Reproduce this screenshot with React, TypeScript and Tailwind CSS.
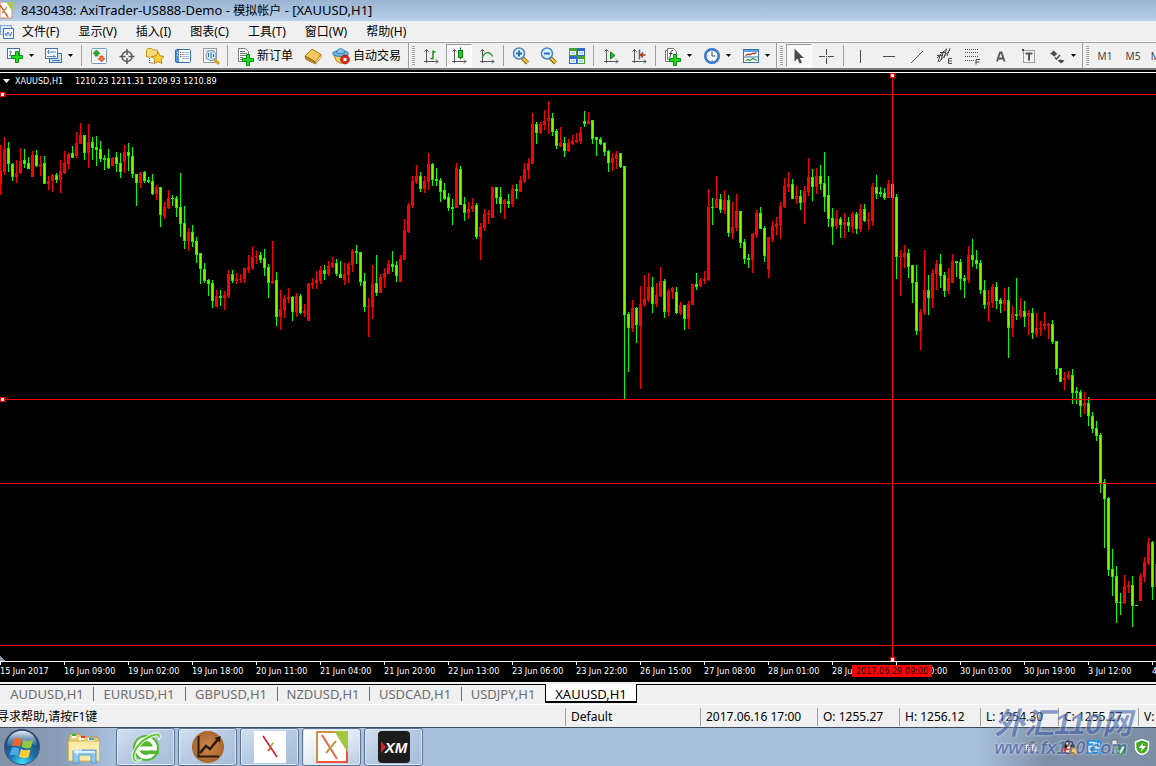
import { type ReactNode } from 'react'
import clsx from 'clsx'

// [colour, high, body top, body bottom, low], one candle every 4px
type Candle = ['r' | 'g', number, number, number, number]

const candles: Candle[] = [
  ['r', 55, 81, 94, 105], ['r', 47, 59, 82, 85], ['g', 52, 58, 74, 82], ['g', 73, 74, 87, 91], ['r', 70, 83, 87, 93],
  ['r', 58, 71, 83, 84], ['g', 59, 70, 74, 78], ['g', 67, 73, 79, 79], ['r', 61, 65, 87, 87], ['g', 60, 65, 76, 77],
  ['r', 66, 74, 77, 86], ['g', 66, 73, 94, 94], ['r', 86, 91, 94, 100], ['r', 84, 85, 91, 102], ['g', 83, 85, 90, 93],
  ['r', 70, 81, 90, 103], ['r', 61, 73, 83, 84], ['r', 63, 64, 74, 79], ['g', 56, 63, 68, 68], ['r', 42, 53, 66, 68],
  ['r', 33, 45, 54, 54], ['g', 45, 45, 63, 70], ['r', 34, 52, 63, 78], ['g', 47, 52, 58, 70], ['g', 46, 57, 60, 76],
  ['g', 51, 59, 69, 72], ['g', 65, 68, 70, 80], ['g', 59, 68, 78, 79], ['r', 67, 68, 76, 76], ['g', 62, 67, 74, 82],
  ['g', 63, 73, 82, 88], ['r', 55, 62, 72, 83], ['g', 53, 62, 66, 81], ['g', 57, 66, 84, 88], ['g', 84, 84, 93, 116],
  ['r', 82, 83, 93, 98], ['g', 81, 82, 91, 93], ['g', 87, 90, 92, 93], ['g', 84, 91, 104, 105], ['r', 95, 97, 104, 110],
  ['g', 97, 97, 125, 137], ['r', 112, 117, 126, 129], ['r', 100, 108, 118, 119], ['g', 105, 108, 109, 116], ['g', 106, 108, 118, 127],
  ['g', 83, 117, 134, 147], ['g', 116, 133, 151, 159], ['r', 138, 142, 151, 161], ['g', 135, 142, 152, 157], ['g', 147, 151, 165, 173],
  ['g', 163, 163, 179, 194], ['g', 173, 179, 191, 193], ['g', 189, 190, 194, 206], ['g', 190, 193, 211, 218], ['r', 200, 206, 217, 217],
  ['g', 200, 206, 208, 216], ['r', 201, 205, 208, 220], ['r', 180, 184, 206, 208], ['g', 180, 184, 191, 193], ['r', 183, 189, 191, 194],
  ['r', 184, 189, 190, 193], ['r', 178, 178, 189, 193], ['r', 165, 177, 180, 183], ['r', 156, 167, 178, 180], ['r', 161, 166, 167, 174],
  ['g', 162, 165, 170, 173], ['g', 159, 168, 178, 186], ['g', 174, 177, 193, 208], ['r', 151, 191, 193, 194], ['g', 182, 190, 227, 236],
  ['r', 200, 219, 227, 240], ['r', 205, 208, 220, 228], ['r', 198, 207, 209, 213], ['g', 206, 207, 222, 231], ['r', 203, 206, 222, 227],
  ['g', 204, 206, 223, 224], ['r', 214, 221, 223, 227], ['r', 193, 194, 231, 231], ['r', 188, 193, 195, 199], ['r', 181, 190, 193, 199],
  ['r', 176, 180, 191, 194], ['g', 175, 180, 184, 190], ['r', 171, 176, 184, 186], ['r', 167, 173, 177, 178], ['g', 169, 173, 184, 186],
  ['g', 171, 184, 188, 188], ['r', 173, 184, 190, 195], ['r', 172, 174, 185, 193], ['r', 159, 161, 175, 182], ['g', 155, 161, 163, 174],
  ['g', 162, 162, 192, 196], ['g', 183, 191, 217, 222], ['r', 208, 216, 217, 247], ['r', 175, 194, 217, 229], ['g', 165, 193, 203, 206],
  ['r', 184, 187, 203, 203], ['r', 178, 183, 188, 198], ['r', 170, 174, 184, 184], ['g', 161, 174, 177, 182], ['g', 171, 175, 186, 192],
  ['r', 165, 169, 192, 192], ['r', 129, 140, 170, 170], ['r', 113, 115, 142, 143], ['r', 86, 91, 116, 118], ['r', 75, 86, 92, 94],
  ['g', 82, 86, 99, 102], ['r', 86, 91, 99, 103], ['r', 63, 74, 92, 100], ['g', 73, 74, 90, 96], ['g', 78, 89, 91, 96],
  ['g', 88, 90, 102, 112], ['g', 93, 100, 109, 110], ['g', 103, 107, 118, 121], ['g', 109, 117, 119, 135], ['r', 73, 78, 118, 118],
  ['g', 76, 79, 115, 115], ['g', 107, 114, 123, 131], ['r', 112, 119, 123, 129], ['r', 108, 116, 119, 122], ['g', 113, 115, 147, 149],
  ['r', 133, 137, 147, 170], ['r', 119, 124, 138, 141], ['r', 120, 123, 125, 134], ['r', 97, 97, 128, 128], ['g', 97, 97, 108, 114],
  ['g', 97, 107, 114, 123], ['r', 109, 110, 114, 129], ['g', 104, 111, 114, 118], ['r', 95, 99, 114, 117], ['g', 94, 99, 101, 109],
  ['r', 86, 90, 102, 102], ['r', 73, 79, 91, 93], ['r', 68, 73, 80, 89], ['r', 23, 34, 74, 74], ['g', 32, 34, 43, 54],
  ['r', 32, 34, 43, 44], ['r', 20, 31, 35, 40], ['r', 11, 28, 31, 44], ['g', 23, 28, 42, 46], ['g', 39, 41, 56, 59],
  ['r', 37, 53, 56, 57], ['g', 47, 53, 61, 67], ['r', 49, 53, 61, 62], ['r', 45, 51, 54, 55], ['r', 43, 50, 52, 53],
  ['r', 37, 42, 51, 54], ['g', 21, 31, 34, 37], ['r', 22, 31, 34, 34], ['g', 30, 30, 49, 54], ['g', 47, 47, 50, 66],
  ['g', 47, 49, 54, 55], ['g', 52, 53, 62, 66], ['g', 60, 61, 73, 82], ['r', 63, 68, 73, 81], ['r', 61, 64, 69, 79],
  ['g', 63, 63, 77, 78], ['g', 76, 76, 225, 309], ['g', 222, 224, 238, 282], ['r', 210, 218, 238, 242], ['g', 217, 218, 235, 253],
  ['r', 196, 214, 236, 299], ['r', 185, 209, 215, 217], ['r', 183, 197, 210, 212], ['g', 187, 197, 214, 223], ['r', 193, 205, 214, 217],
  ['r', 177, 191, 206, 207], ['g', 189, 191, 222, 228], ['r', 199, 201, 222, 226], ['r', 197, 198, 202, 209], ['g', 197, 202, 223, 224],
  ['r', 212, 215, 223, 225], ['g', 215, 215, 229, 240], ['r', 211, 214, 229, 239], ['r', 194, 194, 215, 215], ['g', 183, 194, 197, 200],
  ['r', 188, 190, 196, 197], ['r', 181, 189, 191, 194], ['r', 99, 117, 190, 191], ['g', 108, 117, 118, 135], ['r', 86, 109, 118, 118],
  ['g', 104, 109, 120, 123], ['r', 100, 110, 120, 124], ['g', 105, 110, 143, 147], ['r', 112, 137, 143, 149], ['r', 104, 121, 138, 141],
  ['g', 121, 121, 153, 158], ['g', 149, 152, 169, 174], ['g', 164, 168, 170, 178], ['r', 143, 144, 170, 183], ['r', 120, 123, 145, 148],
  ['g', 117, 123, 139, 139], ['g', 136, 138, 166, 172], ['r', 147, 147, 179, 188], ['r', 131, 136, 149, 152], ['r', 127, 134, 137, 145],
  ['r', 112, 116, 135, 149], ['r', 88, 96, 117, 118], ['r', 82, 94, 97, 102], ['g', 89, 94, 109, 109], ['r', 96, 106, 109, 114],
  ['g', 100, 106, 113, 120], ['r', 96, 101, 113, 134], ['r', 68, 87, 102, 106], ['g', 79, 87, 97, 111], ['r', 78, 86, 97, 104],
  ['g', 75, 86, 94, 100], ['g', 62, 93, 107, 122], ['g', 86, 105, 129, 137], ['g', 118, 128, 137, 155], ['r', 120, 129, 136, 139],
  ['g', 127, 129, 135, 148], ['r', 123, 132, 135, 148], ['g', 127, 132, 136, 142], ['r', 122, 124, 137, 143], ['g', 122, 124, 139, 144],
  ['r', 114, 119, 139, 142], ['g', 114, 119, 131, 132], ['r', 122, 130, 131, 140], ['r', 93, 97, 131, 136], ['g', 85, 97, 104, 109],
  ['g', 97, 102, 104, 107], ['g', 98, 103, 108, 110], ['r', 90, 94, 108, 108], ['g', 94, 94, 108, 108], ['g', 104, 107, 167, 189],
  ['r', 160, 166, 167, 206], ['r', 155, 163, 167, 178], ['g', 159, 163, 177, 188], ['g', 175, 175, 193, 213], ['g', 175, 192, 241, 245],
  ['r', 219, 222, 241, 260], ['r', 160, 200, 223, 225], ['g', 185, 200, 208, 225], ['r', 179, 183, 208, 218], ['r', 170, 174, 184, 200],
  ['g', 164, 174, 186, 198], ['g', 182, 185, 201, 207], ['r', 178, 188, 201, 204], ['r', 164, 171, 193, 193], ['g', 171, 171, 173, 187],
  ['g', 169, 172, 189, 200], ['g', 185, 188, 191, 208], ['r', 156, 165, 190, 193], ['g', 149, 165, 170, 177], ['g', 160, 170, 174, 179],
  ['g', 170, 173, 200, 204], ['g', 190, 200, 215, 219], ['r', 200, 212, 215, 232], ['r', 194, 197, 213, 218], ['g', 192, 197, 211, 219],
  ['g', 208, 210, 214, 223], ['r', 198, 210, 214, 221], ['g', 197, 210, 238, 268], ['r', 216, 224, 238, 247], ['g', 188, 224, 226, 230],
  ['r', 208, 220, 226, 228], ['g', 211, 221, 227, 237], ['r', 220, 223, 226, 245], ['g', 218, 223, 243, 249], ['r', 223, 238, 244, 247],
  ['r', 231, 238, 239, 246], ['r', 222, 234, 236, 240], ['r', 233, 234, 236, 249], ['g', 230, 234, 252, 254], ['g', 251, 251, 279, 285],
  ['g', 278, 278, 292, 292], ['r', 282, 288, 290, 300], ['r', 281, 285, 288, 290], ['g', 279, 285, 303, 314], ['g', 297, 301, 303, 314],
  ['g', 300, 302, 316, 327], ['r', 302, 313, 316, 324], ['g', 307, 313, 326, 336], ['g', 322, 326, 339, 343], ['g', 331, 338, 346, 351],
  ['g', 343, 345, 393, 403], ['g', 389, 392, 409, 458], ['g', 407, 408, 480, 486], ['g', 459, 479, 487, 506], ['g', 476, 486, 513, 533],
  ['g', 503, 512, 513, 525], ['r', 485, 496, 513, 514], ['r', 491, 495, 497, 503], ['g', 486, 495, 516, 537], ['g', 515, 515, 516, 516],
  ['r', 483, 486, 511, 511], ['r', 467, 472, 487, 492], ['r', 448, 453, 473, 475], ['g', 451, 452, 497, 510], ['r', 474, 474, 497, 497],
]

const dates = [
  '15 Jun 2017', '16 Jun 09:00', '19 Jun 02:00', '19 Jun 18:00', '20 Jun 11:00', '21 Jun 04:00', '21 Jun 20:00',
  '22 Jun 13:00', '23 Jun 06:00', '23 Jun 22:00', '26 Jun 15:00', '27 Jun 08:00', '28 Jun 01:00', '28 Jun 17:00',
  '29 Jun 10:00', '30 Jun 03:00', '30 Jun 19:00', '3 Jul 12:00', '4 Jul 05:00',
]

const menus = ['文件(F)', '显示(V)', '插入(I)', '图表(C)', '工具(T)', '窗口(W)', '帮助(H)']

const tabs = [
  { name: 'AUDUSD,H1', width: 'w-[92px]' },
  { name: 'EURUSD,H1', width: 'w-[92px]' },
  { name: 'GBPUSD,H1', width: 'w-[92px]' },
  { name: 'NZDUSD,H1', width: 'w-[92px]' },
  { name: 'USDCAD,H1', width: 'w-[92px]' },
  { name: 'USDJPY,H1', width: 'w-[84px]' },
]

const statusCells = [
  { text: 'Default', width: 'w-[135px]' },
  { text: '2017.06.16 17:00', width: 'w-[117px]' },
  { text: 'O: 1255.27', width: 'w-[82px]' },
  { text: 'H: 1256.12', width: 'w-[81px]' },
  { text: 'L: 1254.30', width: 'w-[78px]' },
  { text: 'C: 1255.27', width: 'w-[80px]' },
  { text: 'V:', width: 'w-[18px]' },
]

function Icon({ children }: { children: ReactNode }) {
  return (
    <svg width="20" height="20" viewBox="0 0 20 20" fill="none" className="shrink-0" aria-hidden="true">
      {children}
    </svg>
  )
}

function Tool({
  label,
  pressed,
  menu,
  children,
}: {
  label: string
  pressed?: boolean
  menu?: boolean
  children: ReactNode
}) {
  return (
    <button
      aria-label={label}
      className={clsx(
        'flex h-[23px] shrink-0 items-center',
        menu ? 'w-[39px] pl-1' : 'mx-px w-[26px] justify-center',
        pressed && 'border border-t-[#9a9a9a] border-r-white border-b-white border-l-[#9a9a9a] bg-[#f8f8f8]',
      )}
    >
      <Icon>{children}</Icon>
      {menu && (
        <svg width="5" height="3" viewBox="0 0 5 3" className="ml-1 shrink-0" aria-hidden="true">
          <path d="M0 0h5L2.5 3z" fill="#000" />
        </svg>
      )}
    </button>
  )
}

function Sep() {
  return <span className="mx-[2px] h-[21px] w-[2px] shrink-0 border-l border-[#a0a0a0]" />
}

function Grip() {
  return (
    <span className="flex h-full w-[9px] shrink-0 items-center border-l border-[#a0a0a0] pl-[3px]">
      <span className="h-[19px] w-[3px] bg-[repeating-linear-gradient(#a0a0a0_0px_1px,#f0f0f0_1px_2px)]" />
    </span>
  )
}

function Plus({ cy }: { cy: number }) {
  return (
    <path
      d={`M10.500 ${cy - 5.5}h3v4h4v3h-4v4h-3v-4h-4v-3h4z`}
      fill="#1edc1e"
      stroke="#0b8a12"
    />
  )
}

function Axes() {
  return <path d="M5.500 3.500v13.500M3 15.500h14M3.500 5.500l2-2 2 2M15 13.500l2 2-2 2" stroke="#555" />
}

function Lens({ plus }: { plus?: boolean }) {
  return (
    <>
      <path d="M11.500 12l5 5" stroke="#8a6a10" strokeWidth="4" />
      <path d="M12 12.500l4.500 4" stroke="#f3cf3c" strokeWidth="2" />
      <circle cx="8" cy="7.500" r="5.500" fill="#d8efff" stroke="#4a86c0" strokeWidth="1.500" />
      <path d={plus ? 'M5 7.500h6M8 4.500v6' : 'M5 7.500h6'} stroke="#2f6fae" strokeWidth="2" />
    </>
  )
}

function Toolbar() {
  return (
    <div className="flex h-[27px] items-center overflow-hidden border-b-2 border-[#7d7d7d] bg-[#f0f0f0] pl-px">
      <Tool label="新图表" menu>
        <rect x="2.500" y="2.500" width="12" height="10" fill="#fff" stroke="#3f74ad" />
        <path d="M5.500 4.500v6M4 9.500h8M4 6h3" stroke="#6d8fb5" />
        <Plus cy={11} />
      </Tool>
      <Tool label="图表配置" menu>
        <rect x="5.500" y="7.500" width="12" height="9" fill="#cfe2f5" stroke="#3f74ad" />
        <path d="M8 14.500h8" stroke="#3f74ad" />
        <rect x="1.500" y="2.500" width="12" height="10" fill="#f4f9ff" stroke="#3f74ad" />
        <path d="M4.500 4v4M3 6h9M3 10.500h9M10 9v3" stroke="#5f86b2" />
      </Tool>
      <Sep />
      <Tool label="市场报价">
        <rect x="2.500" y="2.500" width="15" height="15" rx="1" fill="#fff" stroke="#6aa0d0" />
        <path d="M4 5h12M4 8h12M4 11h12M4 14h12" stroke="#dcdcdc" />
        <path d="M7.500 4l3.500 3.500h-2v2.500h-3V7.500H4z" fill="#28b428" stroke="#0d7d12" strokeWidth=".7" />
        <path d="M12.500 16L9 12.500h2V10h3v2.500h2z" fill="#ff7a3a" stroke="#c03a10" strokeWidth=".7" />
      </Tool>
      <Tool label="数据窗口">
        <circle cx="10" cy="10.500" r="5" stroke="#5a5a5a" strokeWidth="1.500" />
        <path d="M10 3v6M10 12v6M2.500 10.500h6M11.500 10.500h6" stroke="#5a5a5a" strokeWidth="1.500" />
      </Tool>
      <Tool label="导航">
        <path d="M1.500 11V3.500l1-1h4l1 1.500h5V11z" fill="#f7dd7a" stroke="#c39a28" />
        <path d="M4.500 12v5h4" stroke="#555" strokeDasharray="1 1" />
        <path
          d="M13 6l2 3.800 4 .7-2.900 2.900.7 4.100-3.800-1.900-3.800 1.900.7-4.100L7 10.500l4-.7z"
          fill="#fbd437"
          stroke="#b98411"
        />
      </Tool>
      <Tool label="终端">
        <rect x="2.500" y="3.500" width="15" height="13" rx="1" fill="#fff" stroke="#2f6cab" />
        <path d="M3 4h3v12H3z" fill="#4f95d8" />
        <path d="M4 6.500h1M4 9.500h1" stroke="#fff" />
        <path d="M7 6.500h1M7 8.500h1M7 10.500h1" stroke="#c22" />
        <path d="M9 6.500h7M9 8.500h7M9 10.500h7M9 12.500h7" stroke="#9fb9d6" />
      </Tool>
      <Tool label="策略测试">
        <rect x="2.500" y="2.500" width="13" height="14" fill="#fafafa" stroke="#9a9a9a" />
        <path d="M4 5h10M4 13h4" stroke="#b5b5b5" />
        <path d="M13 13l5 5" stroke="#d8a520" strokeWidth="3" />
        <circle cx="10" cy="9.500" r="5" fill="#cfe7fa" stroke="#5c93c7" />
        <path d="M7.500 7v4M10 6.500v6M12.500 8v3" stroke="#3a6ea5" />
      </Tool>
      <Sep />
      <button className="flex h-[23px] w-[68px] shrink-0 items-center pl-[5px] whitespace-nowrap">
        <Icon>
          <path d="M2.500 2.500h7l3 3v10h-10z" fill="#fff" stroke="#777" />
          <path d="M4 5.500h5M4 7.500h7M4 9.500h6M4 11.500h3M4 13.500h3" stroke="#777" />
          <Plus cy={14} />
        </Icon>
        <span className="ml-px">新订单</span>
      </button>
      <Tool label="MetaEditor">
        <path d="M2 10l7-7 9 5.500-5.500 7.500z" fill="#f3c85a" stroke="#b07a18" />
        <path d="M2 10l1 3.500 9.500 4.500v-2z" fill="#c8882a" stroke="#8d5e12" strokeWidth=".8" />
        <path d="M12.500 16v2L18 11.500V8.500z" fill="#fff2c0" stroke="#a87920" strokeWidth=".8" />
      </Tool>
      <button className="flex h-[23px] w-[81px] shrink-0 items-center pl-1 whitespace-nowrap">
        <Icon>
          <path d="M3 9l2 5.500 5 3 5-3 2-5.500z" fill="#f5cf55" stroke="#b88a1c" />
          <ellipse cx="9.500" cy="7.500" rx="8" ry="3" fill="#6fb5e0" stroke="#3a7fb2" />
          <path d="M5.500 6.500c0-5 8-5 8 0-1.500 1.500-6.500 1.500-8 0z" fill="#8cc9ee" stroke="#3a7fb2" />
          <circle cx="14" cy="13.500" r="4.300" fill="#e02a1c" stroke="#a81408" />
          <rect x="12.500" y="12" width="3" height="3" fill="#fff" />
        </Icon>
        <span className="ml-[2px]">自动交易</span>
      </button>
      <Grip />
      <Tool label="柱状图">
        <Axes />
        <path d="M9.500 12.500h2.500V4.500M12 6H14.500" stroke="#1c8a1c" strokeWidth="1.500" />
      </Tool>
      <Tool label="阴阳烛" pressed>
        <Axes />
        <path d="M11.500 1.500v12" stroke="#0a7a10" />
        <rect x="9.500" y="4.500" width="4" height="7" fill="#22cc33" stroke="#0a7a10" />
      </Tool>
      <Tool label="折线图">
        <Axes />
        <path d="M5 12c3-6 6-8 11-1.500" stroke="#2f9a3a" strokeWidth="1.300" />
      </Tool>
      <Sep />
      <Tool label="放大">
        <Lens plus />
      </Tool>
      <Tool label="缩小">
        <Lens />
      </Tool>
      <Tool label="平铺窗口">
        <path d="M2 2h8v8H2zM10 10h8v8h-8z" fill="#3ea32c" />
        <path d="M10 2h8v8h-8zM2 10h8v8H2z" fill="#2f66d8" />
        <path d="M3 5h6v4H3zM11 5h6v4h-6zM3 13h6v4H3zM11 13h6v4h-6z" fill="#eef4ff" />
        <path d="M4 7h4M12 7h4M4 15h4M12 15h4" stroke="#8fb2dc" />
      </Tool>
      <Sep />
      <Tool label="自动滚动">
        <Axes />
        <path d="M9.500 6v7l4.500-3.500z" fill="#25c03a" stroke="#11801c" />
      </Tool>
      <Tool label="图表平移">
        <Axes />
        <path d="M10.500 3.500v10" stroke="#3a6ea5" strokeWidth="1.500" />
        <path d="M16.500 9h-5M14 6.500L11.500 9l2.500 2.500" stroke="#b03010" strokeWidth="1.300" />
      </Tool>
      <Sep />
      <Tool label="指标列表" menu>
        <path d="M2.500 4.500h9v11h-9z" fill="#fff" stroke="#777" />
        <path d="M4.500 2.500h6l3 3v8h-9z" fill="#fff" stroke="#777" />
        <path d="M10 4.500c-2-.5-2 1-2.300 3.500-.3 2-.5 3.500-2 3.500M6 7.500h3.500" stroke="#333" />
        <Plus cy={14} />
      </Tool>
      <Tool label="时间周期" menu>
        <circle cx="10" cy="10" r="6.800" fill="#f4faff" stroke="#1f62b4" strokeWidth="2.500" />
        <circle cx="10" cy="10" r="7.200" stroke="#5ea7ea" strokeWidth=".8" />
        <path d="M10 5.500V10h3.500" stroke="#444" />
        <path d="M10 14v1M5.500 10h1" stroke="#777" />
      </Tool>
      <Tool label="模板" menu>
        <rect x="2.500" y="3.500" width="15" height="13" fill="#fff" stroke="#3472b0" />
        <path d="M3 4h14v2H3z" fill="#5fa4e4" />
        <path d="M3 11h14" stroke="#3472b0" />
        <path d="M4.500 9.500l2-1h3l2-1h2l2-1" stroke="#a83a1c" strokeWidth="1.300" />
        <path d="M5 14.500l2-1 2 1 3-2 2 1 2 1" stroke="#2a9a34" strokeWidth="1.300" />
      </Tool>
      <Grip />
      <Tool label="光标" pressed>
        <path d="M5.500 2.500v13l3-3 2.200 5 2.300-1-2.200-4.500h4z" fill="#4a4a4a" />
      </Tool>
      <Tool label="十字准线">
        <path d="M9.500 3v6M9.500 12v6M2 10.500h6M11 10.500h6M9 10.500h1" stroke="#4a4a4a" />
      </Tool>
      <Sep />
      <Tool label="垂直线">
        <path d="M9.500 4v13" stroke="#4a4a4a" />
      </Tool>
      <Tool label="水平线">
        <path d="M4 10.500h12" stroke="#4a4a4a" />
      </Tool>
      <Tool label="趋势线">
        <path d="M4 17L16 5" stroke="#4a4a4a" />
      </Tool>
      <Tool label="等距通道">
        <path d="M2 12L12 2.500M4 16L15 4" stroke="#4a4a4a" />
        <path d="M3 16l2.500-8M6 14l2.500-9M9 12l2.500-9M12 10l3-8M2 9.500h6M5 6.500h6" stroke="#4a4a4a" />
        <path d="M17 12.500h-3.500v5H17M13.500 15H17" stroke="#4a4a4a" />
      </Tool>
      <Tool label="斐波纳契回调线">
        <path d="M2 3.500h14M2 6.500h14M2 10.500h14M2 14.500h9" stroke="#4a4a4a" strokeDasharray="1 1" />
        <path d="M17 13.500h-4v5M13 16h3.500" stroke="#4a4a4a" />
      </Tool>
      <Tool label="文字">
        <path d="M6 15.500l3-9h1.500l3 9M7.300 12.500h5" stroke="#555" strokeWidth="1.800" />
      </Tool>
      <Tool label="文字标签">
        <rect x="4.500" y="4.500" width="11" height="12" stroke="#4a4a4a" strokeDasharray="1 1" />
        <rect x="3" y="3" width="2" height="2" fill="#4a4a4a" />
        <path d="M6.500 7.500h7M10 7v7.500" stroke="#555" strokeWidth="2" />
      </Tool>
      <Tool label="箭头" menu>
        <path d="M6.500 4.500l4 3.500-1.500.8-1.500 2-3-2.500-1.500-.2z" fill="#4a4a4a" />
        <path d="M8 11.500l1.500 1.500 3.500-4" stroke="#4a4a4a" strokeWidth="1.500" />
        <path d="M13.500 17l-3-2.500 3-1 4 1-2 2-1.500 1z" fill="#4a4a4a" />
      </Tool>
      <Grip />
      {['M1', 'M5', 'M15'].map((period) => (
        <button key={period} className="w-7 shrink-0 text-[10px] text-[#444]">
          {period}
        </button>
      ))}
    </div>
  )
}

function Handle({ x, y }: { x: number; y: number }) {
  return (
    <g>
      <rect x={x - 2} y={y - 2} width="5" height="5" fill="#f00" />
      <rect x={x - 1} y={y - 1} width="3" height="3" fill="#fff" />
    </g>
  )
}

function Chart() {
  return (
    <main className="relative overflow-hidden border-t border-white bg-black font-['DejaVu_Sans_Condensed','Noto_Sans',sans-serif] text-[9px] leading-3">
      <svg className="block h-[588px] w-full" shapeRendering="crispEdges" role="img" aria-label="XAUUSD,H1">
        <g transform="translate(0 17)">
          {candles.map(([colour, high, top, bottom, low], i) => {
            const fill = colour === 'r' ? '#f00' : '#0f0'
            return (
              <g key={i}>
                <rect x={i * 4} y={high} width="1" height={low - high} fill={fill} />
                <rect x={i * 4 - 1} y={top} width="3" height={bottom - top} fill={fill} />
                {colour === 'g' && bottom - top > 2 && (
                  <rect x={i * 4} y={top + 1} width="1" height={bottom - top - 2} fill="#7fff00" />
                )}
              </g>
            )
          })}
        </g>
        {[21, 326, 410, 572].map((y) => (
          <rect key={y} x="0" y={y} width="100%" height="1" fill="#f00" />
        ))}
        <rect x="892" y="0" width="1" height="588" fill="#f00" />
        <Handle x={2} y={21} />
        <Handle x={2} y={326} />
        <Handle x={892} y={2} />
        <Handle x={892} y={586} />
        <path d="M0 583l5 5H0z" fill="#8896a8" />
      </svg>
      <div className="absolute top-0 left-[3px] flex h-4 items-center gap-[5px] whitespace-nowrap text-white">
        <svg width="7" height="4" viewBox="0 0 7 4" aria-hidden="true">
          <path d="M0 0h7L3.500 4z" fill="#fff" />
        </svg>
        <span className="w-[55px]">XAUUSD,H1</span>
        <span>1210.23 1211.31 1209.93 1210.89</span>
      </div>
      <div className="relative flex h-[21px] border-t border-white">
        {dates.map((date) => (
          <span key={date} className="w-16 shrink-0 whitespace-nowrap text-white">
            <i className="block h-[3px] w-px bg-white" />
            {date}
          </span>
        ))}
        <span className="absolute top-[3px] left-[852px] w-20 bg-[#f00] text-center whitespace-nowrap text-black">
          2017.06.29 09:00
        </span>
      </div>
    </main>
  )
}

function TaskButton({ label, active, children }: { label: string; active?: boolean; children: ReactNode }) {
  return (
    <button
      aria-label={label}
      className={clsx(
        'flex h-[38px] w-[59px] shrink-0 items-center justify-center rounded-[3px] border border-[#5d7391] shadow-[inset_0_0_0_1px_#dce8f5]',
        active
          ? 'bg-linear-to-br from-white via-[#e3ebf4] to-[#b9cce2]'
          : 'bg-linear-to-br from-[#d3e0ef] via-[#b4c9e2] to-[#a6bedb]',
      )}
    >
      <svg width="32" height="32" viewBox="0 0 32 32" fill="none" aria-hidden="true">
        {children}
      </svg>
    </button>
  )
}

function Taskbar() {
  return (
    <footer className="flex h-[39px] items-start border-t border-[#3d4b5c] bg-[linear-gradient(90deg,#8193ab_0px,#8a9cb5_60px,#a7c0dc_110px,#a7c0dc_calc(100%-180px),#7e91a8_calc(100%-110px),#7b8ea4_100%)]">
      <button aria-label="开始" className="ml-1 shrink-0">
        <svg width="37" height="38" viewBox="0 0 37 38" aria-hidden="true">
          <defs>
            <radialGradient id="orb" cx=".5" cy=".95" r=".9">
              <stop offset="0" stopColor="#3fe0ff" />
              <stop offset=".4" stopColor="#1a72b0" />
              <stop offset="1" stopColor="#1b3a63" />
            </radialGradient>
            <linearGradient id="gloss" x1="0" y1="0" x2="0" y2="1">
              <stop offset="0" stopColor="#e8f2fa" />
              <stop offset="1" stopColor="#7fa6c9" stopOpacity=".3" />
            </linearGradient>
          </defs>
          <circle cx="18" cy="19" r="17.500" fill="url(#orb)" stroke="#3a5270" />
          <path d="M3 17C4 -2 32 -2 33 17 24 14 12 20 3 17z" fill="url(#gloss)" />
          <path d="M10 11c3-1.500 5-1 8 .5l-2 7.500c-3-1.500-5-1.500-8-.5z" fill="#f0652c" />
          <path d="M19.500 12c3 1.500 6 1.500 9.500 0l-2 7.500c-3 1.500-6 1-9.500-.5z" fill="#92c83e" />
          <path d="M7.500 20c3-1 5-1 8 .5L13.500 28c-3-1.500-5-1.500-8-.5z" fill="#4aa8e8" />
          <path d="M17 21c3 1.500 6 1.500 9.500.5L24.500 29c-3 1.500-6 1-9.500-.5z" fill="#fdd03a" />
        </svg>
      </button>
      <button aria-label="资源管理器" className="mt-1 mr-[15px] ml-[26px] shrink-0">
        <svg width="34" height="32" viewBox="0 0 34 32" aria-hidden="true">
          <path d="M2 4l2-2h9l2 3h15l2 2v22H2z" fill="#e9cd72" stroke="#b89a48" />
          <path d="M5 2h4v4H5zM12 5h5v3h-5zM21 6h6v3h-6z" fill="#fff" />
          <path d="M5 2h4v2H5z" fill="#2db050" />
          <path d="M14 4h4v2h-4z" fill="#e03a2a" />
          <path d="M22 6h5v2h-5z" fill="#3aa0e8" />
          <path d="M1.500 9h31v20h-31z" fill="#fbe9a6" stroke="#d6b75e" />
          <path d="M6 18h23v13h-5v-8H12v8H6z" fill="#8fc8ec" stroke="#5b9cca" />
          <path d="M7 20h21" stroke="#d9f0ff" strokeWidth="2" />
          <path d="M10 13v10M5 18h10" stroke="#fff" />
        </svg>
      </button>
      <div className="flex gap-[3px]">
        <TaskButton label="360安全浏览器">
          <circle cx="16" cy="17" r="13" fill="#4fb82c" />
          <circle cx="16" cy="17" r="9" stroke="#fff" strokeWidth="4" />
          <path d="M8 15.500h16v4H8z" fill="#fff" />
          <path d="M20 19.500h9v3.500h-9z" fill="#4fb82c" />
          <path d="M11.500 15c1-5 8-5 9 0z" fill="#4fb82c" />
          <path d="M3 29C-2 22 12 3 27 2c4 0 4 4 2 7 0-4-2-5-6-3C12 10 4 20 5 27c0 3 4 3 7 1-3 4-7 4-9 1z" fill="#63c836" stroke="#fff" />
        </TaskButton>
        <TaskButton label="行情图表">
          <defs>
            <radialGradient id="copper">
              <stop offset="0" stopColor="#d08a4a" />
              <stop offset="1" stopColor="#a8652e" />
            </radialGradient>
          </defs>
          <circle cx="16" cy="16" r="16" fill="url(#copper)" />
          <path d="M6.500 5v20.500H27" stroke="#2a1a10" strokeWidth="2" />
          <path d="M8 22l6-7 4 3 9-11" stroke="#2a1a10" strokeWidth="2.500" />
          <path d="M22.500 7l6-2-.5 6.500z" fill="#2a1a10" />
        </TaskButton>
        <TaskButton label="AxiTrader">
          <path d="M0 0h32v32H0z" fill="#fff" />
          <path d="M9 5l14 21" stroke="#dc1428" strokeWidth="1.500" />
          <path d="M14 20l3-4" stroke="#e04020" strokeWidth="1.500" />
          <path d="M16.500 15.500l3-4" stroke="#8ac040" strokeWidth="1.500" />
        </TaskButton>
        <TaskButton label="AxiTrader MT4" active>
          <path d="M1 1h30v30H1z" fill="#fff" stroke="#e8553c" strokeWidth="2" />
          <path d="M1 31V1h18" stroke="#c8a848" strokeWidth="1.500" />
          <path d="M18 0h14v22z" fill="#a3c840" />
          <path d="M6 4l15 24" stroke="#dd6a45" strokeWidth="2" />
          <path d="M20 10L10 22" stroke="#b99a50" strokeWidth="2" />
        </TaskButton>
        <TaskButton label="XM">
          <rect width="32" height="32" rx="4" fill="#1c1c1c" />
          <path d="M3 10l5 6-5 6z" fill="#e31b23" />
          <text
            x="18"
            y="22"
            textAnchor="middle"
            fill="#fff"
            className="font-['Liberation_Sans'] text-[15px] font-bold italic"
          >
            XM
          </text>
        </TaskButton>
      </div>
      <div className="ml-auto flex items-center gap-2 self-center pr-[6px]">
        <svg width="16" height="16" viewBox="0 0 16 16" fill="none" className="mr-4" aria-hidden="true">
          <path d="M8 5c0-3 4 0 4-3" stroke="#555" />
          <rect x="1" y="5" width="14" height="8" rx="1" fill="#eee" stroke="#777" />
          <path d="M3 7.500h10M3 9.500h10M5 11.500h6" stroke="#555" strokeDasharray="1 1" />
        </svg>
        <svg width="16" height="16" viewBox="0 0 16 16" aria-hidden="true">
          <ellipse cx="7" cy="8.500" rx="5.500" ry="7" fill="#151515" />
          <ellipse cx="7" cy="11" rx="3" ry="3.500" fill="#fff" />
          <circle cx="5.300" cy="4.500" r="1.200" fill="#fff" />
          <circle cx="8.700" cy="4.500" r="1.200" fill="#fff" />
          <path d="M4.500 6.500h5L7 8z" fill="#f5a623" />
          <path d="M1.500 8c3 2 8 2 11 0v2c-3 1.500-7 1.500-8.500 1v3H2z" fill="#e02020" />
          <path d="M8 9h8v6H8z" fill="#f2b84a" stroke="#b77c1b" />
        </svg>
        <svg width="16" height="16" viewBox="0 0 16 16" fill="none" aria-hidden="true">
          <rect x="1" y="1" width="14" height="14" rx="2" fill="#2390e0" />
          <path d="M3 3.500h5v4H3v5h5M10 3v6h3V4M9 12.500h4" stroke="#e7f5ff" strokeWidth="1.300" />
        </svg>
        <svg width="16" height="16" viewBox="0 0 16 16" fill="none" aria-hidden="true">
          <path d="M2 1h5v5H2zM3 6h3v8H3z" fill="#e8e8e8" stroke="#777" />
          <circle cx="10.500" cy="11" r="5" fill="#2f9a35" />
          <path d="M8 11l2 2.500L13.500 8" stroke="#fff" strokeWidth="1.700" />
        </svg>
        <svg width="16" height="16" viewBox="0 0 16 16" aria-hidden="true">
          <path d="M8 .5l6.500 2.500v5c0 4-3 6.500-6.500 7.500C4.500 14.500 1.500 12 1.500 8V3z" fill="#45ab22" stroke="#fff" strokeWidth="1.500" />
          <path d="M9.500 3.500L4.500 9H8l-1.500 4L12 7H8.500z" fill="#fff" />
        </svg>
      </div>
    </footer>
  )
}

export default function App() {
  return (
    <div className="relative min-h-screen w-full overflow-hidden bg-[#f0f0f0] font-['Noto_Sans','Noto_Sans_CJK_SC',sans-serif] text-[12px] leading-4 text-black">
      <header className="flex h-[21px] items-center bg-linear-to-b from-[#98b3d2] to-[#b9d0ea]">
        <svg width="13" height="17" viewBox="0 0 13 17" fill="none" aria-hidden="true">
          <path d="M0 0h12v16H0z" fill="#fff" stroke="#e08060" />
          <path d="M6 0h7v10z" fill="#a8c850" />
          <path d="M0 3l8 12" stroke="#dd5a3c" strokeWidth="1.500" />
          <path d="M7 5l-5 6" stroke="#b99a50" strokeWidth="1.500" />
        </svg>
        <h1 className="ml-2 truncate text-[13px]">
          8430438: AxiTrader-US888-Demo - <span className="text-[12px]">模拟帐户</span> - [XAUUSD,H1]
        </h1>
      </header>

      <nav className="flex h-[22px] items-center gap-[19px] border-b border-[#a0a0a0] shadow-[inset_0_-1px_#fff]">
        <svg width="14" height="14" viewBox="0 0 14 14" fill="none" className="-mr-[11px] shrink-0" aria-hidden="true">
          <path d="M.5 .5h11v9H.5z" fill="#d7e9fb" stroke="#4a82cc" strokeDasharray="2 1" />
          <path d="M3.500 3.500h10v10h-10z" fill="#f2f8ff" stroke="#3a72c4" />
          <path d="M5 8l1.500 3L8 7l2 4 2-4" stroke="#3a72c4" />
        </svg>
        {menus.map((menu) => (
          <button key={menu} className="shrink-0">
            {menu}
          </button>
        ))}
      </nav>

      <Toolbar />
      <div className="h-[2px] bg-black" />
      <Chart />

      <div className="flex h-[23px] border-b border-white pt-[2px] text-[13px]">
        <div className="w-px border-t border-black" />
        {tabs.map((tab, i) => (
          <button
            key={tab.name}
            className={clsx('relative shrink-0 border-t border-black pb-[2px] text-[#6d6d6d]', tab.width)}
          >
            {tab.name}
            {i < tabs.length - 1 && <span className="absolute top-[2px] -right-px h-[14px] w-px bg-[#6d6d6d]" />}
          </button>
        ))}
        <button className="mb-px w-[92px] shrink-0 border-x border-b-2 border-black bg-white pt-[2px]">XAUUSD,H1</button>
        <div className="flex-1 border-t border-black" />
      </div>

      <div className="flex h-[22px] items-center pt-[2px] whitespace-nowrap">
        <span className="-ml-[3px] min-w-0 flex-1">寻求帮助,请按F1键</span>
        {statusCells.map((cell) => (
          <span
            key={cell.text}
            className={clsx('h-[18px] shrink-0 overflow-hidden border-l border-[#a0a0a0] pl-[5px] leading-[18px]', cell.width)}
          >
            {cell.text}
          </span>
        ))}
      </div>

      <Taskbar />

      <div className="pointer-events-none absolute right-6 bottom-2 font-bold text-[#4463a8] italic opacity-60 [text-shadow:0_0_2px_#fff,0_0_2px_#fff]">
        <p className="font-['Liberation_Sans','Noto_Sans_CJK_SC',sans-serif] text-[30px] leading-7">外汇110网</p>
        <p className="font-['Liberation_Sans',sans-serif] text-[18px] leading-5">www.fx110.com</p>
      </div>
    </div>
  )
}
